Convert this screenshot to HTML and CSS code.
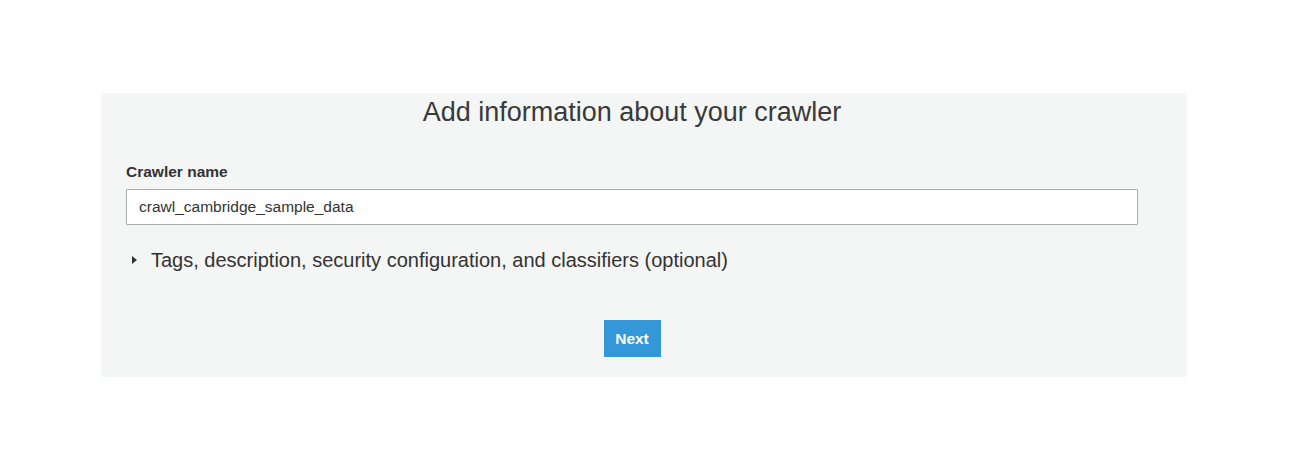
FILE: index.html
```html
<!DOCTYPE html>
<html lang="en">
<head>
    <meta charset="UTF-8">
    <title>Add crawler</title>
    <link rel="stylesheet" href="styles.css">
</head>
<body>

    <div class="panel">
        <h1>Add information about your crawler</h1>

        <label class="field-label" for="crawlerName">Crawler name</label>
        <input class="text-input" id="crawlerName" type="text" value="crawl_cambridge_sample_data">

        <div class="expander">
            <span class="caret"></span>
            <span>Tags, description, security configuration, and classifiers (optional)</span>
        </div>

        <div class="actions">
            <button class="next-btn">Next</button>
        </div>
    </div>

</body>
</html>
```

FILE: styles.css
```css
body {
    font-family: "Liberation Sans", Arial, sans-serif;
    background: #fff;
    color: #333;
    margin: 0;
    padding: 93px 0 0 101px;
}
.panel {
    width: 1086px;
    height: 284px;
    box-sizing: border-box;
    background: #f4f5f5;
    padding: 0 49px 0 25px;
}
h1 {
    margin: 0;
    padding-top: 4px;
    font-size: 27px;
    font-weight: normal;
    text-align: center;
    color: #3a3a3a;
    line-height: 30px;
}
.field-label {
    display: block;
    margin-top: 36px;
    font-size: 15.5px;
    font-weight: bold;
    color: #333;
    line-height: 18px;
}
.text-input {
    display: block;
    width: 100%;
    box-sizing: border-box;
    height: 36px;
    margin-top: 8px;
    padding: 0 12px;
    border: 1px solid #aaa;
    border-radius: 1px;
    background: #fff;
    font-family: "Liberation Sans", Arial, sans-serif;
    font-size: 15.5px;
    color: #333;
}
.expander {
    display: flex;
    align-items: center;
    margin-top: 23px;
    font-size: 20px;
    color: #333;
    line-height: 24px;
}
.caret {
    width: 0;
    height: 0;
    border-top: 4px solid transparent;
    border-bottom: 4px solid transparent;
    border-left: 5px solid #333;
    margin: 0 14px 0 6px;
}
.actions {
    display: flex;
    justify-content: center;
    margin-top: 48px;
}
.next-btn {
    width: 57px;
    height: 37px;
    border: none;
    background: #3498d8;
    color: #fff;
    font-family: "Liberation Sans", Arial, sans-serif;
    font-size: 15.5px;
    font-weight: bold;
    cursor: pointer;
}
```
